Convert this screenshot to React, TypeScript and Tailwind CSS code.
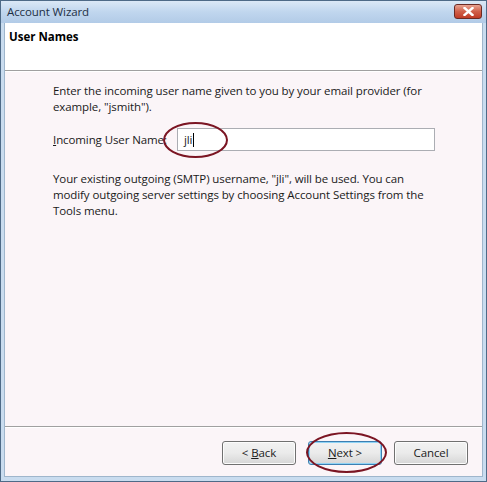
import React from 'react';

const font = { fontFamily: '"Segoe UI", "Open Sans", "Liberation Sans", sans-serif' };

function Button({ children, focused }: { children: React.ReactNode; focused?: boolean }) {
  return (
    <button
      className={
        'w-[74px] h-[24px] rounded-[3px] border text-[11.5px] tracking-[-0.1px] text-[#1b1b1b] bg-gradient-to-b from-[#f2f2f2] via-[#ebebeb] to-[#d6d6d6] ' +
        (focused ? 'border-[#3c7fb1] shadow-[inset_0_0_0_1px_#8fd3f5]' : 'border-[#707070] shadow-[inset_0_0_0_1px_#fcfcfc]')
      }
    >
      {children}
    </button>
  );
}

export default function App() {
  return (
    <div className="w-[487px] h-[482px] relative bg-[#c9dcef] border border-[#4e6a87] flex flex-col text-[#1a1a1a]" style={font}>
      {/* Title bar */}
      <div className="h-[22px] shrink-0 flex items-center justify-between pl-[6px] pr-[4px] bg-gradient-to-b from-[#dbe8f6] via-[#c0d6ee] to-[#b2cbe7]">
        <span className="text-[11.5px] tracking-[-0.1px] text-[#1e3045]">Account Wizard</span>
        <div className="w-[28px] h-[15px] mt-[-2px] rounded-[3px] border border-[#6b2a24] bg-gradient-to-b from-[#e8a392] via-[#d0604a] to-[#c03b26] flex items-center justify-center">
          <svg width="11" height="9" viewBox="0 0 11 9">
            <path d="M1.5 1 L9.5 8 M9.5 1 L1.5 8" stroke="#fff" strokeWidth="2.4" strokeLinecap="square" />
          </svg>
        </div>
      </div>

      {/* Client area */}
      <div className="flex-1 mx-[3px] mb-[4px] flex flex-col bg-[#fbf5f8] border-l border-r border-b border-[#9fb6cc]">
        {/* Header */}
        <div className="h-[48px] shrink-0 bg-white px-[4px] pt-[6px] border-b border-[#a0a0a0] text-[11.5px] leading-[16px]">
          <span className="font-bold text-black">User Names</span>
        </div>
        <div className="h-px bg-white" />

        {/* Body */}
        <div className="flex-1 pl-[48px] pr-[40px] pt-[11px] text-[11.5px] tracking-[-0.1px] leading-[16px]">
          <p>Enter the incoming user name given to you by your email provider (for example, "jsmith").</p>
          <div className="flex items-center mt-[13px] h-[23px]">
            <span className="w-[124px] shrink-0">
              <span className="underline">I</span>ncoming User Name:
            </span>
            <div className="flex-1 h-[23px] bg-white border border-[#abadb3] flex items-center pl-[6px] mr-[7px]">
              <span>jli</span>
              <span className="w-px h-[14px] bg-black ml-[1px]" />
            </div>
          </div>
          <p className="mt-[20px]">
            Your existing outgoing (SMTP) username, "jli", will be used. You can modify outgoing server settings by
            choosing Account Settings from the Tools menu.
          </p>
        </div>

        {/* Footer */}
        <div className="h-px bg-[#a0a0a0]" />
        <div className="h-px bg-white" />
        <div className="h-[48px] shrink-0 flex items-start justify-end gap-[12px] pr-[14px] pt-[13px]">
          <Button>
            &lt; <span className="underline">B</span>ack
          </Button>
          <Button focused>
            <span className="underline">N</span>ext &gt;
          </Button>
          <Button>Cancel</Button>
        </div>
      </div>

      {/* Annotation ellipses */}
      <div className="absolute left-[162px] top-[121px] w-[65px] h-[36px] rounded-[50%] border-[2.5px] border-[#7b1523]" />
      <div className="absolute left-[305px] top-[431px] w-[81px] h-[41px] rounded-[50%] border-[2.5px] border-[#7b1523]" />
    </div>
  );
}
